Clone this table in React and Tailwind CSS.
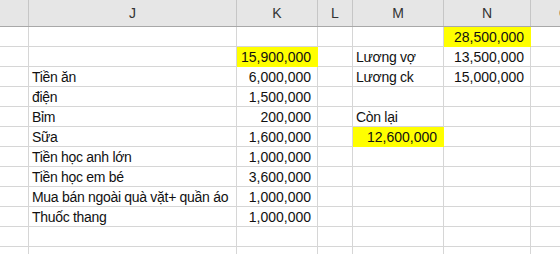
import React from 'react'

const cols = [
  { key: 'rh', w: 'w-[29px]', label: '' },
  { key: 'J', w: 'w-[208px]', label: 'J' },
  { key: 'K', w: 'w-[81px]', label: 'K' },
  { key: 'L', w: 'w-[35px]', label: 'L' },
  { key: 'M', w: 'w-[91px]', label: 'M' },
  { key: 'N', w: 'w-[87px]', label: 'N' },
  { key: 'O', w: 'w-[68px]', label: 'O' },
]

// each row: { J, K, M, N } plus which cells are yellow
const rows = [
  { N: '28,500,000', yellow: ['N'] },
  { K: '15,900,000', M: 'Lương vợ', N: '13,500,000', yellow: ['K'] },
  { J: 'Tiền ăn', K: '6,000,000', M: 'Lương ck', N: '15,000,000' },
  { J: 'điện', K: '1,500,000' },
  { J: 'Bỉm', K: '200,000', M: 'Còn lại' },
  { J: 'Sữa', K: '1,600,000', M: '12,600,000', yellow: ['M'] },
  { J: 'Tiền học anh lớn', K: '1,000,000' },
  { J: 'Tiền học em bé', K: '3,600,000' },
  { J: 'Mua bán ngoài quà vặt+ quần áo', K: '1,000,000' },
  { J: 'Thuốc thang', K: '1,000,000' },
  {},
  {},
]

const isNumber = (v) => /^[\d,]+$/.test(v || '')

export default function App() {
  return <div className="w-[560px] h-[254px] overflow-hidden bg-white text-[#111]" style={{ fontFamily: '"Liberation Sans", Arial, sans-serif' }}>
    <div className="flex w-max h-[27px] bg-[#e6e6e6] border-b border-[#a8a8a8]">
      {cols.map((c) => (
        <div key={c.key} className={`${c.w} shrink-0 h-full border-r border-[#c6c6c6] flex items-center justify-center text-[14px] text-[#333] pt-[1px]`}>
          {c.label}
        </div>
      ))}
    </div>
    {rows.map((r, i) => (
      <div key={i} className="flex w-max h-[20px]">
        {cols.map((c) => {
          const v = r[c.key]
          const yellow = (r.yellow || []).includes(c.key)
          return (
            <div
              key={c.key}
              className={`${c.w} shrink-0 h-full border-r border-b ${yellow ? 'bg-[#ffff00] border-[#ffff00]' : 'border-[#d6d6d6]'} flex items-end pb-[2px] text-[14px] leading-none whitespace-nowrap ${isNumber(v) ? 'justify-end pr-[6px]' : 'justify-start pl-[3px] tracking-[-0.3px]'}`}
            >
              {v}
            </div>
          )
        })}
      </div>
    ))}
  </div>
}
